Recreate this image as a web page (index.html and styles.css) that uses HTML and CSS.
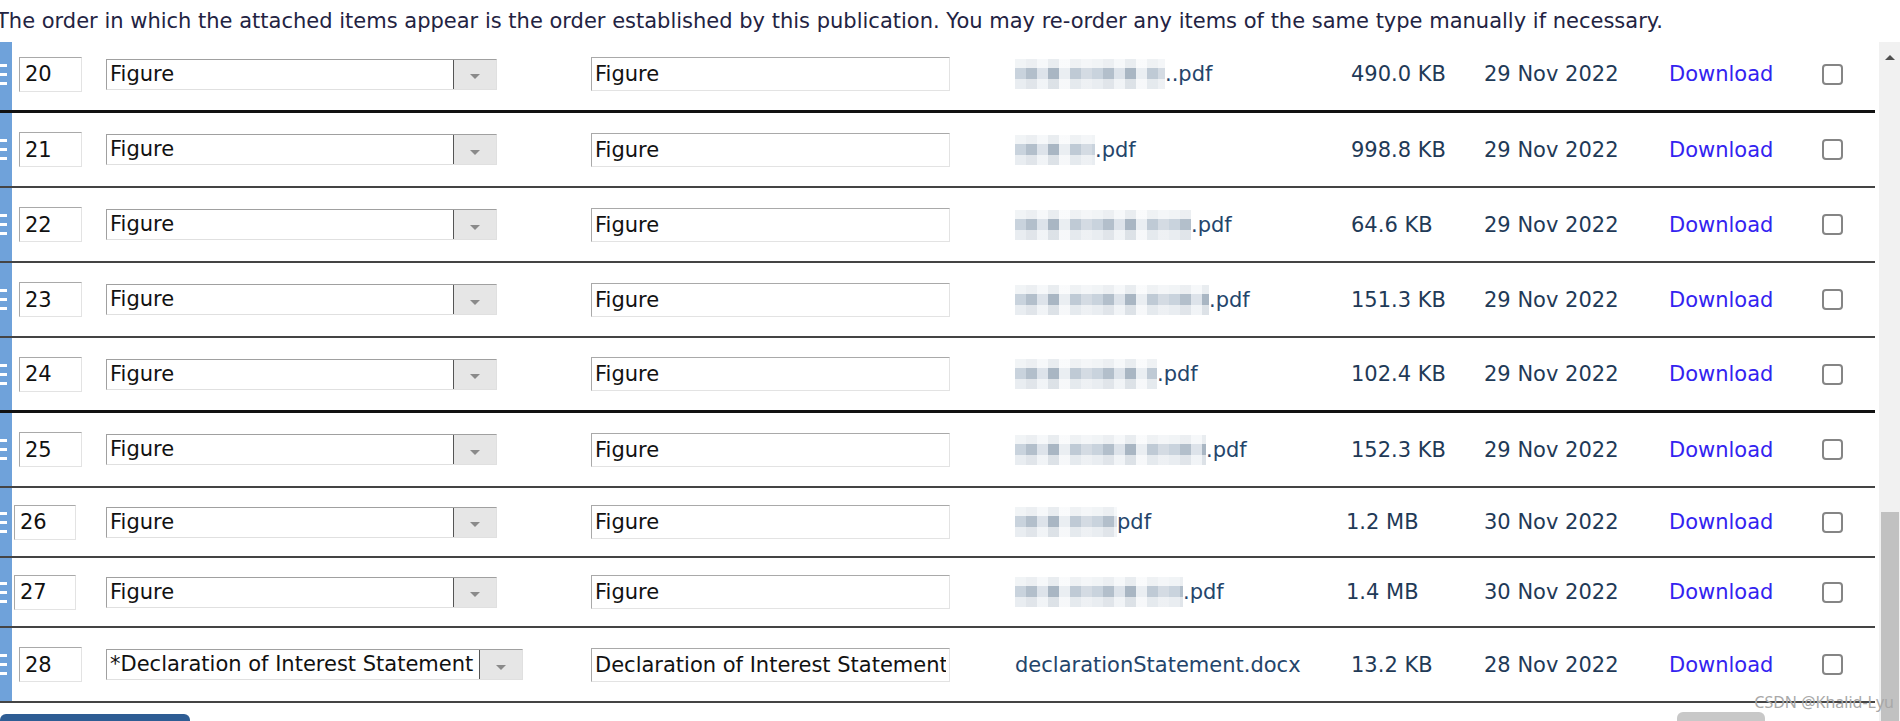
FILE: index.html
```html
<!DOCTYPE html>
<html>
<head>
    <title>Attached items</title>
    <link rel="stylesheet" href="styles.css">
</head>
<body>
    <p class="intro">The order in which the attached items appear is the order established by this publication. You may re-order any items of the same type manually if necessary.</p>

    <div class="frame">
        <div class="list">
            <div class="row first thick">
                <div class="handle"><span class="grip"></span></div>
                <input class="num" type="text" value="20">
                <div class="select"><span class="select-text">Figure</span><span class="select-btn"><i></i></span></div>
                <input class="text" type="text" value="Figure">
                <div class="file"><span class="blur" style="width:150px"></span>..pdf</div>
                <div class="size">490.0 KB</div>
                <div class="date">29 Nov 2022</div>
                <a class="dl" href="#">Download</a>
                <input class="check" type="checkbox">
            </div>
            <div class="row">
                <div class="handle"><span class="grip"></span></div>
                <input class="num" type="text" value="21">
                <div class="select"><span class="select-text">Figure</span><span class="select-btn"><i></i></span></div>
                <input class="text" type="text" value="Figure">
                <div class="file"><span class="blur" style="width:80px"></span>.pdf</div>
                <div class="size">998.8 KB</div>
                <div class="date">29 Nov 2022</div>
                <a class="dl" href="#">Download</a>
                <input class="check" type="checkbox">
            </div>
            <div class="row">
                <div class="handle"><span class="grip"></span></div>
                <input class="num" type="text" value="22">
                <div class="select"><span class="select-text">Figure</span><span class="select-btn"><i></i></span></div>
                <input class="text" type="text" value="Figure">
                <div class="file"><span class="blur" style="width:176px"></span>.pdf</div>
                <div class="size">64.6 KB</div>
                <div class="date">29 Nov 2022</div>
                <a class="dl" href="#">Download</a>
                <input class="check" type="checkbox">
            </div>
            <div class="row">
                <div class="handle"><span class="grip"></span></div>
                <input class="num" type="text" value="23">
                <div class="select"><span class="select-text">Figure</span><span class="select-btn"><i></i></span></div>
                <input class="text" type="text" value="Figure">
                <div class="file"><span class="blur" style="width:194px"></span>.pdf</div>
                <div class="size">151.3 KB</div>
                <div class="date">29 Nov 2022</div>
                <a class="dl" href="#">Download</a>
                <input class="check" type="checkbox">
            </div>
            <div class="row thick">
                <div class="handle"><span class="grip"></span></div>
                <input class="num" type="text" value="24">
                <div class="select"><span class="select-text">Figure</span><span class="select-btn"><i></i></span></div>
                <input class="text" type="text" value="Figure">
                <div class="file"><span class="blur" style="width:142px"></span>.pdf</div>
                <div class="size">102.4 KB</div>
                <div class="date">29 Nov 2022</div>
                <a class="dl" href="#">Download</a>
                <input class="check" type="checkbox">
            </div>
            <div class="row">
                <div class="handle"><span class="grip"></span></div>
                <input class="num" type="text" value="25">
                <div class="select"><span class="select-text">Figure</span><span class="select-btn"><i></i></span></div>
                <input class="text" type="text" value="Figure">
                <div class="file"><span class="blur" style="width:191px"></span>.pdf</div>
                <div class="size">152.3 KB</div>
                <div class="date">29 Nov 2022</div>
                <a class="dl" href="#">Download</a>
                <input class="check" type="checkbox">
            </div>
            <div class="row short">
                <div class="handle"><span class="grip"></span></div>
                <input class="num" type="text" value="26">
                <div class="select"><span class="select-text">Figure</span><span class="select-btn"><i></i></span></div>
                <input class="text" type="text" value="Figure">
                <div class="file"><span class="blur" style="width:102px"></span>pdf</div>
                <div class="size">1.2 MB</div>
                <div class="date">30 Nov 2022</div>
                <a class="dl" href="#">Download</a>
                <input class="check" type="checkbox">
            </div>
            <div class="row short">
                <div class="handle"><span class="grip"></span></div>
                <input class="num" type="text" value="27">
                <div class="select"><span class="select-text">Figure</span><span class="select-btn"><i></i></span></div>
                <input class="text" type="text" value="Figure">
                <div class="file"><span class="blur" style="width:168px"></span>.pdf</div>
                <div class="size">1.4 MB</div>
                <div class="date">30 Nov 2022</div>
                <a class="dl" href="#">Download</a>
                <input class="check" type="checkbox">
            </div>
            <div class="row">
                <div class="handle"><span class="grip"></span></div>
                <input class="num" type="text" value="28">
                <div class="select wide"><span class="select-text">*Declaration of Interest Statement</span><span class="select-btn"><i></i></span></div>
                <input class="text" type="text" value="Declaration of Interest Statement">
                <div class="file">declarationStatement.docx</div>
                <div class="size">13.2 KB</div>
                <div class="date">28 Nov 2022</div>
                <a class="dl" href="#">Download</a>
                <input class="check" type="checkbox">
            </div>

            <div class="actions">
                <span class="btn-primary"></span>
                <span class="btn-secondary"></span>
            </div>
        </div>

        <div class="scrollbar">
            <span class="arrow"><i></i></span>
            <span class="track"></span>
            <span class="thumb"></span>
        </div>
    </div>

    <div class="watermark">CSDN @Khalid-Lyu</div>
</body>
</html>
```

FILE: styles.css
```css
body {
    margin: 0;
    font-family: "DejaVu Sans", Verdana, sans-serif;
    color: #232342;
    background-color: #fff;
    overflow: hidden;
}

.intro {
    margin: 0 0 0 -4px;
    height: 42px;
    line-height: 42px;
    font-size: 21px;
    white-space: nowrap;
}

.frame {
    display: flex;
    gap: 4px;
    height: 679px;
}

.list {
    width: 1875px;
    flex-shrink: 0;
    overflow: hidden;
}

/* one attachment per row */
.row {
    display: grid;
    grid-template-columns: 19px 87px 485px 424px 336px 133px 185px 153px 1fr;
    align-items: center;
    height: 75px;
    box-sizing: border-box;
    border-bottom: 2px solid #444;
    font-size: 21px;
}

.row.thick {
    border-bottom: 3px solid #111;
}

.row.first {
    margin-top: -4px;
}

.row.short {
    height: 70px;
    grid-template-columns: 14px 92px 485px 424px 331px 138px 185px 153px 1fr;
}

.handle {
    align-self: stretch;
    width: 12px;
    background-color: #6fa2da;
    display: flex;
    align-items: center;
}

.grip {
    width: 7px;
    height: 3px;
    background-color: #fff;
    box-shadow: 0 -9px 0 #fff, 0 9px 0 #fff;
}

.num,
.text {
    height: 35px;
    box-sizing: border-box;
    margin: 0;
    font-family: "DejaVu Sans", Verdana, sans-serif;
    font-size: 21px;
    color: #111;
    border: 1px solid;
    border-color: #a9a9a9 #e3e3e3 #e3e3e3 #a9a9a9;
    outline: none;
}

.num {
    width: 63px;
    padding: 0 5px;
}

.row.short .num {
    width: 62px;
}

.text {
    width: 359px;
    height: 34px;
    padding: 0 3px;
}

.select {
    width: 391px;
    height: 31px;
    box-sizing: border-box;
    display: flex;
    border: 1px solid;
    border-color: #a0a0a0 #e0e0e0 #e0e0e0 #a0a0a0;
    font-size: 21px;
    color: #111;
}

.select.wide {
    width: 417px;
}

.select-text {
    flex: 1;
    padding-left: 3px;
    line-height: 29px;
    white-space: nowrap;
    overflow: hidden;
}

.select-btn {
    width: 42px;
    flex-shrink: 0;
    background-color: #e6e6e6;
    border-left: 1px solid #555;
    display: flex;
    align-items: center;
    justify-content: center;
}

.select-btn i {
    margin-top: 5px;
    border-left: 5px solid transparent;
    border-right: 5px solid transparent;
    border-top: 5px solid #8a8a8a;
}

.file {
    display: flex;
    align-items: center;
    white-space: nowrap;
    color: #24456b;
}

/* pixelated file names */
.blur {
    display: inline-block;
    height: 30px;
    background:
        linear-gradient(180deg, rgba(255,255,255,.75) 0 30%, rgba(255,255,255,0) 30% 68%, rgba(255,255,255,.6) 68%),
        repeating-linear-gradient(90deg, #c9d3dd 0 11px, #b3bfcb 11px 22px, #dde3ea 22px 33px, #a9b6c3 33px 44px, #eaeef2 44px 55px, #bfcad5 55px 66px, #d4dbe3 66px 77px);
}

.size,
.date {
    color: #1f3a57;
}

.dl {
    color: #3323f0;
    text-decoration: none;
}

.check {
    appearance: none;
    width: 21px;
    height: 21px;
    margin: 0;
    box-sizing: border-box;
    border: 2px solid #858585;
    border-radius: 4px;
    background-color: #fff;
}

.actions {
    display: flex;
    justify-content: space-between;
    align-items: flex-start;
    margin-top: 11px;
    padding-right: 110px;
}

.btn-primary {
    width: 190px;
    height: 30px;
    background-color: #2e5d94;
    border-radius: 6px 6px 0 0;
}

.btn-secondary {
    width: 88px;
    height: 30px;
    margin-top: -2px;
    background-color: #c8c8c8;
    border-radius: 6px;
}

.scrollbar {
    width: 21px;
    display: flex;
    flex-direction: column;
    background-color: #f1f1f1;
}

.arrow {
    height: 30px;
    display: flex;
    align-items: center;
    justify-content: center;
}

.arrow i {
    border-left: 5px solid transparent;
    border-right: 5px solid transparent;
    border-bottom: 5px solid #505050;
}

.track {
    flex: 1;
}

.thumb {
    height: 209px;
    margin: 0 1px 0 2px;
    background-color: #c1c1c1;
}

.watermark {
    position: absolute;
    right: 6px;
    bottom: 8px;
    font-family: "Noto Sans", sans-serif;
    font-size: 16px;
    color: #a8a8a8;
}
```
